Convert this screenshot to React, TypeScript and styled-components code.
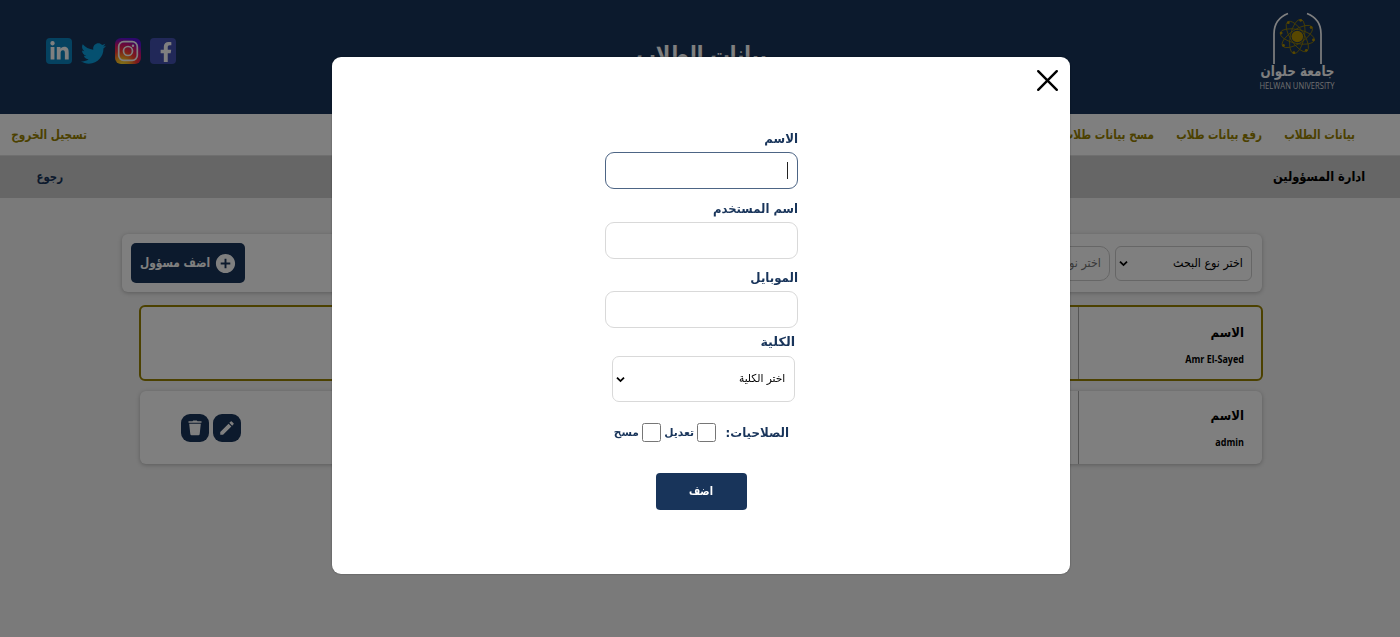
import React from 'react';
import styled, { createGlobalStyle } from 'styled-components';
import { FaFacebookF, FaLinkedinIn, FaTwitter } from 'react-icons/fa';
import { MdAddCircle, MdEdit } from 'react-icons/md';

const navy = '#18345a';
const gold = '#998200';

const GlobalStyle = createGlobalStyle`
  * { box-sizing: border-box; }
  body {
    margin: 0;
    height: 637px;
    overflow: hidden;
    background: #f4f4f4;
    font-family: "DejaVu Sans Condensed", "DejaVu Sans", sans-serif;
  }
`;

const Page = styled.div`
  direction: rtl;
  height: 637px;
  overflow: hidden;
`;

const Text = styled.span<{ $size: number; $weight?: number; $stretch?: number; $color?: string; $center?: boolean }>`
  display: block;
  white-space: nowrap;
  font-size: ${p => p.$size}px;
  font-weight: ${p => p.$weight ?? 700};
  color: ${p => p.$color ?? 'inherit'};
  line-height: 20px;
  transform: scaleX(${p => p.$stretch ?? 1});
  transform-origin: ${p => (p.$center ? 'center' : 'right center')};
`;

const Header = styled.header`
  display: grid;
  grid-template-columns: 200px 1fr 200px;
  height: 114px;
  padding: 0 45px;
  background: ${navy};
  color: #fff;
`;

const LogoSlot = styled.div`
  padding: 10px 16px 0 0;
`;

const TitleSlot = styled.div`
  display: flex;
  justify-content: center;
  padding: 45px 0 0 4px;
`;

const Socials = styled.div`
  display: flex;
  direction: ltr;
  gap: 8.7px;
  padding: 38px 0 0 1px;
`;

const BirdSlot = styled.span`
  display: flex;
  align-items: center;
  justify-content: center;
  width: 26px;
  height: 30px;
`;

const SocialTile = styled.span<{ $bg: string; $corner?: boolean }>`
  display: flex;
  align-items: ${p => (p.$corner ? 'flex-end' : 'center')};
  justify-content: ${p => (p.$corner ? 'flex-end' : 'center')};
  width: 26px;
  height: 26px;
  padding-bottom: ${p => (p.$corner ? 2 : 0)}px;
  border-radius: 4px;
  background: ${p => p.$bg};
  color: #fff;
`;

const Nav = styled.nav`
  display: flex;
  align-items: center;
  justify-content: space-between;
  height: 42px;
  padding: 0 45px 0 11px;
  background: #fff;
  color: ${gold};
  border-bottom: 1px solid #dedede;
`;

const NavLinks = styled.div`
  display: flex;
  gap: 21px;
`;

const NavItem = styled.div<{ $width: number }>`
  width: ${p => p.$width}px;
`;

const SubBar = styled.div`
  display: flex;
  align-items: center;
  justify-content: space-between;
  height: 42px;
  padding: 0 35px 0 37px;
  background: #ccc;
  color: #000;
`;

const Main = styled.main`
  padding: 36px 138px 0 122px;
`;

const Toolbar = styled.section`
  display: flex;
  align-items: center;
  height: 58px;
  padding: 0 10px 0 9px;
  border-radius: 6px;
  background: #fff;
  box-shadow: 0 1px 4px rgba(0, 0, 0, 0.25);
`;

const FilterBox = styled.div<{ $width: number; $radius: number }>`
  display: flex;
  align-items: center;
  justify-content: space-between;
  width: ${p => p.$width}px;
  height: 35px;
  margin-left: 5px;
  padding: 0 8px 0 3px;
  border: 1px solid #ccc;
  border-radius: ${p => p.$radius}px;
`;

const AddButton = styled.button`
  display: flex;
  align-items: center;
  gap: 4px;
  width: 114px;
  height: 40px;
  margin-right: auto;
  padding: 0 8px 0 0;
  border: 0;
  border-radius: 5px;
  background: ${navy};
  color: #fff;
  font-family: inherit;
`;

const List = styled.div`
  display: flex;
  flex-direction: column;
  gap: 10px;
  padding: 13px 0 0 17px;
`;

const Card = styled.article<{ $active?: boolean }>`
  display: flex;
  height: ${p => (p.$active ? 76 : 73)}px;
  margin: ${p => (p.$active ? '0 -1px 0 0' : '0 0 0 1px')};
  border: ${p => (p.$active ? `2px solid ${gold}` : '0')};
  border-radius: 6px;
  background: #fff;
  box-shadow: ${p => (p.$active ? 'none' : '0 1px 4px rgba(0, 0, 0, 0.25)')};
`;

const NameCell = styled.div<{ $active?: boolean }>`
  width: ${p => (p.$active ? 183 : 184)}px;
  padding: ${p => (p.$active ? '16px 17px 0 0' : '15px 18px 0 0')};
  border-left: 1px solid #aaa;
`;

const CardValue = styled.div`
  margin-top: 5.5px;
  font: 700 10px/20px "Open Sans", sans-serif;
  transform: scaleX(0.9);
  transform-origin: right center;
`;

const Actions = styled.div`
  display: flex;
  align-items: center;
  gap: 4px;
  margin-right: auto;
  padding-left: 41px;
`;

const IconButton = styled.button`
  display: flex;
  align-items: center;
  justify-content: center;
  width: 28px;
  height: 28px;
  padding: 0;
  border: 0;
  border-radius: 9px;
  background: ${navy};
  color: #fff;
`;

const Overlay = styled.div`
  position: fixed;
  inset: 0;
  display: flex;
  justify-content: center;
  align-items: flex-start;
  padding: 57px 0 0 2px;
  direction: ltr;
  background: rgba(0, 0, 0, 0.5);
`;

const Modal = styled.div`
  width: 738px;
  height: 516.5px;
  border-radius: 9px;
  background: #fff;
  color: ${navy};
  box-shadow: 0 0 2px rgba(0, 0, 0, 0.4);
`;

const CloseRow = styled.div`
  display: flex;
  justify-content: flex-end;
  height: 71px;
  padding: 12px 11px 0 0;
`;

const Form = styled.form`
  display: flex;
  flex-direction: column;
  direction: rtl;
  width: 193px;
  margin: 0 auto;
`;

const Field = styled.div`
  height: 69.5px;
  padding-top: 1px;
`;

const InputBox = styled.div<{ $focused?: boolean }>`
  display: flex;
  align-items: center;
  height: 37px;
  margin-top: 3px;
  padding: 0 9px;
  border: 1px solid ${p => (p.$focused ? '#4d6585' : '#d9d9d9')};
  border-radius: 9px;
`;

const Caret = styled.span`
  width: 1px;
  height: 17px;
  background: #222;
`;

const SelectField = styled.div`
  padding: 0 3px 0 7px;
  margin-top: -5px;
`;

const SelectBox = styled.div`
  display: flex;
  align-items: center;
  justify-content: space-between;
  height: 46px;
  margin-top: 4px;
  padding: 1px 8px 0 3px;
  border: 1px solid #d9d9d9;
  border-radius: 7px;
  color: #000;
`;

const Permissions = styled.div`
  display: flex;
  align-items: center;
  height: 20px;
  margin-top: 21px;
  padding-right: 9px;
`;

const Slot = styled.div<{ $width: number; $gap?: number }>`
  flex: none;
  width: ${p => p.$width}px;
  margin-left: ${p => p.$gap ?? 0}px;
`;

const Check = styled.span`
  flex: none;
  width: 19px;
  height: 19px;
  margin-left: 3px;
  border: 1px solid #767676;
  border-radius: 2.5px;
`;

const Submit = styled.button`
  display: flex;
  align-items: center;
  justify-content: center;
  align-self: center;
  width: 91px;
  height: 37px;
  margin-top: 30px;
  padding: 0;
  border: 0;
  border-radius: 4px;
  background: ${navy};
  color: #fff;
  font-family: inherit;
`;

const Chevron = () => (
  <svg width="9" height="7" viewBox="0 0 10 8" fill="none" stroke="#000" strokeWidth="2.1">
    <path d="M1 1.8 5 5.8 9 1.8" />
  </svg>
);

const Trash = () => (
  <svg width="14" height="16" viewBox="0 0 14 16" fill="currentColor">
    <path d="M0.5 1.2H4.5L5.2 0.5H8.8L9.5 1.2H13.5V2.7H0.5Z" />
    <path d="M1.2 3.8H12.8L11.7 14Q11.6 15.2 10.4 15.2H3.6Q2.4 15.2 2.3 14Z" />
  </svg>
);

const Logo = () => (
  <svg width="84" height="84" viewBox="1255 10 84 84" fill="none" overflow="visible">
    <g stroke="#fff" strokeWidth="1.7">
      <path d="M1274 64V34C1274 24 1279 17 1288 13.5" />
      <path d="M1321 64V34C1321 24 1316 17 1307 13.5" />
    </g>
    <g stroke={gold} strokeWidth="0.8">
      {[0, 45, 90, 135].map(a => (
        <ellipse key={a} cx="1297.3" cy="36.5" rx="17.5" ry="7" transform={`rotate(${a + 12} 1297.3 36.5)`} />
      ))}
    </g>
    <g fill="#b08f00">
      <circle cx="1297.3" cy="36.5" r="5.8" />
      {[12, 57, 102, 147, 192, 237, 282, 327].map(a => (
        <circle key={a} cx={1297.3 + 16.5 * Math.cos((a * Math.PI) / 180)} cy={36.5 + 16.5 * Math.sin((a * Math.PI) / 180)} r="1.4" />
      ))}
    </g>
    <text x="1297.5" y="75.5" fill="#fff" fontSize="15" textAnchor="middle" direction="rtl" textLength="74" lengthAdjust="spacingAndGlyphs" fontFamily="DejaVu Sans" fontWeight="700">جامعة حلوان</text>
    <text x="1259.5" y="88.5" fill="#ddd" fontSize="8.6" direction="ltr" textLength="75" lengthAdjust="spacingAndGlyphs" fontFamily="Open Sans">HELWAN UNIVERSITY</text>
  </svg>
);

const Instagram = () => (
  <svg width="26" height="26" viewBox="0 0 26 26" fill="none">
    <defs>
      <radialGradient id="ig" cx="0.27" cy="1.05" r="1.1">
        <stop offset="0.05" stopColor="#ffdd33" />
        <stop offset="0.25" stopColor="#ffb020" />
        <stop offset="0.5" stopColor="#ff3b30" />
        <stop offset="0.75" stopColor="#d0107a" />
        <stop offset="0.95" stopColor="#5a10d8" />
      </radialGradient>
    </defs>
    <rect width="26" height="26" rx="6" fill="url(#ig)" />
    <rect x="3.7" y="3.7" width="18.6" height="18.6" rx="5" stroke="#fff" strokeWidth="1.7" />
    <circle cx="13" cy="13" r="4.5" stroke="#fff" strokeWidth="1.7" />
    <circle cx="18" cy="7.8" r="1.2" fill="#fff" />
  </svg>
);

export default function App() {
  return (
    <Page>
      <GlobalStyle />
      <Header>
        <LogoSlot><Logo /></LogoSlot>
        <TitleSlot><Text $size={24} $stretch={0.9} $center>بيانات الطلاب</Text></TitleSlot>
        <Socials>
          <SocialTile $bg="#0a84c0"><FaLinkedinIn size={21} /></SocialTile>
          <BirdSlot><FaTwitter size={25} color="#0aa0e0" /></BirdSlot>
          <Instagram />
          <SocialTile $bg="#4350b0" $corner><FaFacebookF size={20} /></SocialTile>
        </Socials>
      </Header>
      <Nav>
        <NavLinks>
          <NavItem $width={72}><Text $size={13} $stretch={0.9}>بيانات الطلاب</Text></NavItem>
          <NavItem $width={87}><Text $size={13} $stretch={0.89}>رفع بيانات طلاب</Text></NavItem>
          <NavItem $width={95}><Text $size={13} $stretch={0.9}>مسح بيانات طلاب</Text></NavItem>
        </NavLinks>
        <NavItem $width={76}><Text $size={13} $stretch={0.905}>تسجيل الخروج</Text></NavItem>
      </Nav>
      <SubBar>
        <Text $size={13} $stretch={0.98}>ادارة المسؤولين</Text>
        <NavItem $width={26}><Text $size={13} $stretch={0.87} $color={navy}>رجوع</Text></NavItem>
      </SubBar>
      <Main>
        <Toolbar>
          <FilterBox $width={137} $radius={6}>
            <Text $size={12} $weight={400} $stretch={1.03}>اختر نوع البحث</Text>
            <Chevron />
          </FilterBox>
          <FilterBox $width={150} $radius={10}>
            <Text $size={12} $weight={400} $stretch={1.03} $color="#757575">اختر نوع البحث</Text>
          </FilterBox>
          <AddButton>
            <MdAddCircle size={23} />
            <Text $size={13} $stretch={0.91}>اضف مسؤول</Text>
          </AddButton>
        </Toolbar>
        <List>
          <Card $active>
            <NameCell $active>
              <Text $size={13}>الاسم</Text>
              <CardValue>Amr El-Sayed</CardValue>
            </NameCell>
          </Card>
          <Card>
            <NameCell>
              <Text $size={13}>الاسم</Text>
              <CardValue>admin</CardValue>
            </NameCell>
            <Actions>
              <IconButton><MdEdit size={18} /></IconButton>
              <IconButton><Trash /></IconButton>
            </Actions>
          </Card>
        </List>
      </Main>
      <Overlay>
        <Modal>
          <CloseRow>
            <svg width="23" height="23" viewBox="0 0 23 23" stroke="#000" strokeWidth="2.4" strokeLinecap="round">
              <path d="M2.2 2.2 20.8 20.8M20.8 2.2 2.2 20.8" />
            </svg>
          </CloseRow>
          <Form>
            <Field><Text $size={12.5} $stretch={1.05}>الاسم</Text><InputBox $focused><Caret /></InputBox></Field>
            <Field><Text $size={12.5} $stretch={1.035}>اسم المستخدم</Text><InputBox /></Field>
            <Field><Text $size={12.5} $stretch={1.05}>الموبايل</Text><InputBox /></Field>
            <SelectField>
              <Text $size={12.5} $stretch={1.13}>الكلية</Text>
              <SelectBox>
                <Text $size={11} $weight={400} $stretch={1.07}>اختر الكلية</Text>
                <Chevron />
              </SelectBox>
            </SelectField>
            <Permissions>
              <Slot $width={63} $gap={10}><Text $size={12.5} $stretch={1.05}>الصلاحيات:</Text></Slot>
              <Check />
              <Slot $width={29} $gap={4}><Text $size={11} $stretch={1.08}>تعديل</Text></Slot>
              <Check />
              <Slot $width={25}><Text $size={11} $stretch={1.08}>مسح</Text></Slot>
            </Permissions>
            <Submit type="button"><Text $size={11.5} $stretch={0.93} $center>اضف</Text></Submit>
          </Form>
        </Modal>
      </Overlay>
    </Page>
  );
}
